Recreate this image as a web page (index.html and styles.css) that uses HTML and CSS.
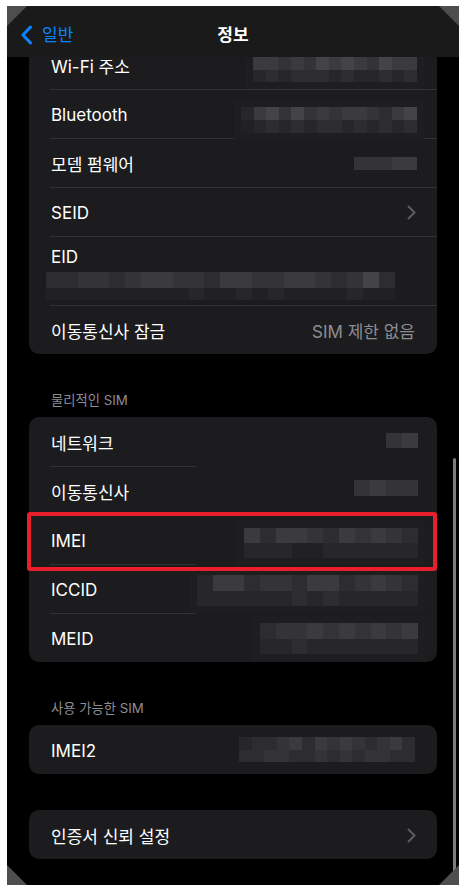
FILE: index.html
```html
<!DOCTYPE html>
<html lang="ko">
<head>
  <meta charset="UTF-8">
  <meta name="viewport" content="width=device-width, initial-scale=1.0">
  <title>정보</title>
  <link rel="stylesheet" href="styles.css">
</head>
<body>

<div class="screen">

  <!-- Navigation bar -->
  <header class="navbar">
    <a class="back" href="#">
      <svg width="13" height="20" viewBox="0 0 13 20"><path d="M10.5 2 L3 10 L10.5 18" fill="none" stroke="#0a84ff" stroke-width="3" stroke-linecap="round" stroke-linejoin="round"/></svg>
      <span>일반</span>
    </a>
    <h1 class="title">정보</h1>
    <span></span>
  </header>

  <main class="content">

    <!-- Network info -->
    <section class="card">
      <div class="row">
        <span>Wi-Fi 주소</span>
        <div class="blur b-wifi" data-cells="5545465654655 2323332322323"></div>
      </div>
      <div class="row">
        <span>Bluetooth</span>
        <div class="blur b-bt" data-cells="25646454554356 12323233232323"></div>
      </div>
      <div class="row">
        <span>모뎀 펌웨어</span>
        <div class="blur b-modem" data-cells="44455"></div>
      </div>
      <div class="row">
        <span>SEID</span>
        <svg class="chevron" width="9" height="15" viewBox="0 0 9 15"><path d="M1.5 1.5 L7.5 7.5 L1.5 13.5" fill="none" stroke="#5c5c60" stroke-width="2" stroke-linecap="round" stroke-linejoin="round"/></svg>
      </div>
      <div class="row tall">
        <span class="eid-label">EID</span>
        <div class="blur b-eid" data-cells="3344345544355445543463 1111111112112121111211"></div>
      </div>
      <div class="row">
        <span>이동통신사 잠금</span>
        <span class="value">SIM 제한 없음</span>
      </div>
    </section>

    <p class="section-label">물리적인 SIM</p>

    <!-- Physical SIM -->
    <section class="card sim">
      <div class="row">
        <span>네트워크</span>
        <div class="blur b-net" data-cells="45"></div>
      </div>
      <div class="row">
        <span>이동통신사</span>
        <div class="blur b-carrier" data-cells="4544"></div>
      </div>
      <div class="row">
        <span>IMEI</span>
        <div class="blur b-imei" data-cells="53554354543 22211222222"></div>
        <span class="highlight"></span>
      </div>
      <div class="row">
        <span>ICCID</span>
        <div class="blur b-iccid" data-cells="25534435534543 22222232322222"></div>
      </div>
      <div class="row">
        <span>MEID</span>
        <div class="blur b-meid" data-cells="3445454545 2232222222"></div>
      </div>
    </section>

    <p class="section-label">사용 가능한 SIM</p>

    <!-- Available SIM -->
    <section class="card">
      <div class="row">
        <span>IMEI2</span>
        <div class="blur b-imei2" data-cells="23345354543453 33443343434433"></div>
      </div>
    </section>

    <section class="card spaced">
      <div class="row">
        <span>인증서 신뢰 설정</span>
        <svg class="chevron" width="9" height="15" viewBox="0 0 9 15"><path d="M1.5 1.5 L7.5 7.5 L1.5 13.5" fill="none" stroke="#5c5c60" stroke-width="2" stroke-linecap="round" stroke-linejoin="round"/></svg>
      </div>
    </section>

  </main>

  <div class="scrollbar"></div>

  <!-- screenshot corner marks -->
  <span class="corner tl"></span>
  <span class="corner tr"></span>
  <span class="corner bl"></span>
  <span class="corner br"></span>
</div>

<script>
  // Build the pixelated mosaics from their shade strings
  document.querySelectorAll('.blur').forEach(function (el) {
    el.dataset.cells.split(' ').forEach(function (line) {
      for (const ch of line) {
        const cell = document.createElement('i');
        cell.className = 's' + ch;
        el.appendChild(cell);
      }
    });
  });
</script>

</body>
</html>
```

FILE: styles.css
```css
/* Global Styles */
body {
  margin: 0;
  background-color: #ffffff;
  font-family: Inter, "Noto Sans CJK KR", sans-serif;
}
.screen {
  position: relative;
  width: 452px;
  height: 879px;
  margin: 6px 0 0 7px;
  background-color: #000;
  overflow: hidden;
  color: #fff;
}

/* Navigation bar */
.navbar {
  position: absolute;
  top: 0;
  left: 0;
  right: 0;
  z-index: 5;
  height: 51px;
  padding-top: 4px;
  box-sizing: border-box;
  background-color: #1a1a1a;
  display: grid;
  grid-template-columns: 1fr auto 1fr;
  align-items: center;
}
.back {
  display: flex;
  align-items: center;
  gap: 9px;
  padding-left: 13px;
  color: #0a84ff;
  text-decoration: none;
  font-size: 17px;
}
.back svg {
  margin-top: 3px;
}
.title {
  margin: 0;
  font-size: 17px;
  font-weight: 600;
}

/* Lists */
.content {
  padding-top: 34px;
}
.card {
  margin: 0 22px;
  background-color: #1c1c1e;
  border-radius: 10px;
}
.card.spaced {
  margin-top: 36px;
}
.row {
  position: relative;
  height: 49px;
  padding: 2px 22px 0 22px;
  box-sizing: border-box;
  display: flex;
  align-items: center;
  justify-content: space-between;
  font-size: 17px;
}
.row + .row::before {
  content: "";
  position: absolute;
  top: 0;
  left: 21px;
  right: 0;
  height: 1px;
  background-color: #323235;
}
.sim .row + .row::before {
  right: auto;
  width: 146px;
}
.row.tall {
  height: 69px;
  align-items: flex-start;
  padding-top: 11px;
}
.value {
  color: #8d8d93;
}
.chevron {
  margin-right: -1px;
}
.section-label {
  margin: 38px 0 9px;
  padding-left: 44px;
  font-size: 13.3px;
  line-height: 16px;
  color: #8d8d93;
}

/* Red highlight box */
.highlight {
  position: absolute;
  top: -3px;
  left: -2px;
  right: 0;
  bottom: -7px;
  z-index: 2;
  border: 4px solid #e8202b;
  border-radius: 3px;
}

/* Pixelated values */
.blur {
  position: absolute;
  right: 20px;
  z-index: 1;
  display: grid;
  background-color: #1e1e20;
  box-shadow: 0 0 0 7px #1e1e20;
}
.blur i {
  display: block;
}
.s0 { background-color: #1c1c1e; }
.s1 { background-color: #212123; }
.s2 { background-color: #27272a; }
.s3 { background-color: #2d2d30; }
.s4 { background-color: #343437; }
.s5 { background-color: #3b3b3e; }
.s6 { background-color: #444447; }

.b-wifi {
  top: 17px;
  grid-template-columns: repeat(13, 12.6px);
  grid-auto-rows: 12.5px;
}
.b-bt {
  top: 18px;
  grid-template-columns: repeat(14, 12.57px);
  grid-auto-rows: 13px;
}
.b-modem {
  top: 19px;
  grid-template-columns: repeat(5, 12.6px);
  grid-auto-rows: 13px;
  box-shadow: none;
}
.b-eid {
  top: 36px;
  left: 17px;
  right: auto;
  grid-template-columns: repeat(22, 15.85px);
  grid-template-rows: 16px 12px;
  box-shadow: none;
}
.b-net {
  top: 16px;
  right: 19px;
  grid-template-columns: repeat(2, 16px);
  grid-auto-rows: 15px;
  box-shadow: none;
}
.b-carrier {
  top: 14px;
  right: 19px;
  grid-template-columns: repeat(4, 16px);
  grid-auto-rows: 16px;
  box-shadow: none;
}
.b-imei {
  top: 13px;
  right: 19px;
  grid-template-columns: repeat(11, 15.8px);
  grid-auto-rows: 15px;
}
.b-iccid {
  top: 11px;
  right: 19px;
  grid-template-columns: repeat(14, 15.8px);
  grid-auto-rows: 15.5px;
}
.b-meid {
  top: 10px;
  right: 19px;
  grid-template-columns: repeat(10, 15.8px);
  grid-auto-rows: 15.5px;
}
.b-imei2 {
  top: 12px;
  right: 22px;
  grid-template-columns: repeat(14, 12.57px);
  grid-auto-rows: 12.5px;
  box-shadow: none;
}

/* Scroll indicator */
.scrollbar {
  position: absolute;
  top: 452px;
  right: 3px;
  width: 3px;
  height: 422px;
  border-radius: 2px;
  background-color: #7d7d7d;
}

/* Corner marks of the screenshot */
.corner {
  position: absolute;
  z-index: 10;
  width: 20px;
  height: 20px;
  background-color: #4e4e4e;
}
.corner.tl { top: 0; left: 0; clip-path: polygon(0 0, 100% 0, 0 100%); }
.corner.tr { top: 0; right: 0; clip-path: polygon(0 0, 100% 0, 100% 100%); }
.corner.bl { bottom: 0; left: 0; clip-path: polygon(0 0, 100% 100%, 0 100%); }
.corner.br { bottom: 0; right: 0; clip-path: polygon(100% 0, 100% 100%, 0 100%); }
```
